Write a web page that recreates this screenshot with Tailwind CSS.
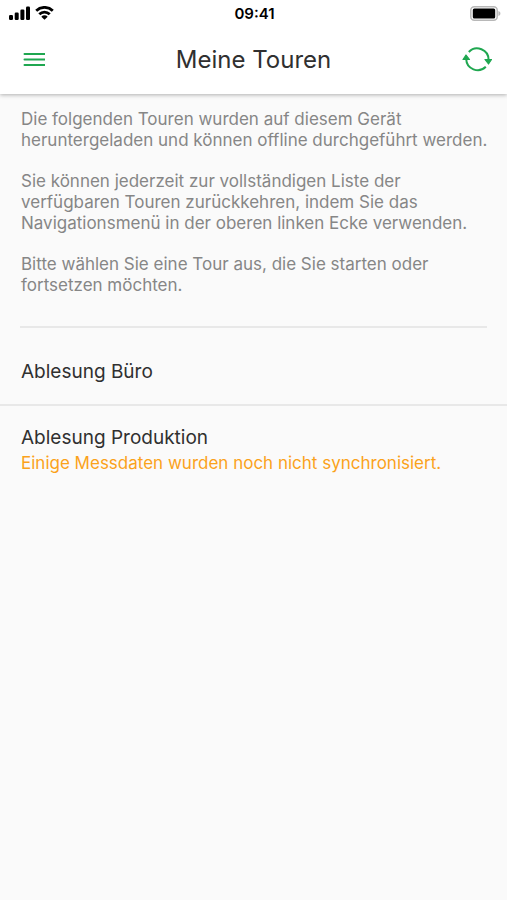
<!DOCTYPE html>
<html lang="de">
<head>
  <meta charset="UTF-8" />
  <meta name="viewport" content="width=device-width, initial-scale=1.0"/>
  <title>Meine Touren</title>
  <script src="https://cdn.jsdelivr.net/npm/@tailwindcss/browser@4"></script>
</head>
<body class="min-h-screen bg-[#fafafa] font-['Inter','Liberation_Sans',sans-serif] text-[#303030]">

  <header class="bg-white shadow-[0_1px_4px_rgba(0,0,0,0.3)]">
    <!-- Status bar -->
    <div class="grid grid-cols-3 items-center h-[26px] pl-2 pr-[6px] text-black">
      <div class="flex items-center gap-1">
        <svg class="w-[23px] h-[14px]" viewBox="0 0 23 14" fill="currentColor" aria-hidden="true">
          <rect x="1" y="9" width="4" height="5" rx="1.2"/>
          <rect x="6.7" y="6.500" width="4" height="7.500" rx="1.2"/>
          <rect x="12.4" y="3.500" width="4" height="10.500" rx="1.2"/>
          <rect x="18" y="0.500" width="4" height="13.500" rx="1.2"/>
        </svg>
        <svg class="w-[19px] h-[14px]" viewBox="0 0 19 14" fill="none" stroke="currentColor" stroke-width="2.800" aria-hidden="true">
          <path d="M1.2 4.700a12 12 0 0 1 16.6 0"/>
          <path d="M4.300 8.300a7.4 7.4 0 0 1 10.4 0"/>
          <path d="M9.5 13.700 6.300 10.700a4.500 4.500 0 0 1 6.400 0z" fill="currentColor" stroke="none"/>
        </svg>
      </div>
      <p class="pt-px text-center text-[15px] leading-5 font-semibold">09:41</p>
      <svg class="justify-self-end w-[31px] h-[15px]" viewBox="0 0 31 15" aria-hidden="true">
        <rect x="0.8" y="0.8" width="26.4" height="13.4" rx="3.5" fill="#fff" stroke="#b8b8b8" stroke-width="1.5"/>
        <rect x="2.8" y="2.6" width="22.4" height="9.8" rx="1.5" fill="#000"/>
        <path d="M28.4 5v5c1.4-.5 2-1.5 2-2.5s-.6-2-2-2.5z" fill="#b8b8b8"/>
      </svg>
    </div>

    <!-- Title bar -->
    <div class="flex items-center justify-between h-[68px] px-2">
      <button type="button" aria-label="Menü" class="flex items-center justify-center size-[52px] text-[#1fa750]">
        <svg class="w-[22px] h-[16px]" viewBox="0 0 22 16" stroke="currentColor" stroke-width="2" stroke-linecap="round" aria-hidden="true">
          <path d="M1.500 2h20M1.500 7.500h20M1.500 13h20"/>
        </svg>
      </button>
      <h1 class="text-2xl">Meine Touren</h1>
      <button type="button" aria-label="Synchronisieren" class="flex items-center justify-end pr-[7px] size-[52px] text-[#1fa750]">
        <svg class="w-[30px] h-[26px]" viewBox="0 0 30 26" fill="none" stroke="currentColor" stroke-width="2" aria-hidden="true">
          <path d="M6.800 5A11.500 11.500 0 0 1 26.600 13"/>
          <path d="M23.800 19.800A11.500 11.500 0 0 1 4.200 12"/>
          <path d="M23 12.500h6.500L26.500 17z" fill="currentColor" stroke-width="1.200" stroke-linejoin="round"/>
          <path d="M1 12.500h6.500L4 8z" fill="currentColor" stroke-width="1.200" stroke-linejoin="round"/>
        </svg>
      </button>
    </div>
  </header>

  <main>
    <!-- Intro -->
    <section class="pt-[15px] pl-[21px] pr-2 space-y-5 text-[17px] leading-[21px] text-[#868686]">
      <p>Die folgenden Touren wurden auf diesem Gerät<br>heruntergeladen und können offline durchgeführt werden.</p>
      <p>Sie können jederzeit zur vollständigen Liste der<br>verfügbaren Touren zurückkehren, indem Sie das<br>Navigationsmenü in der oberen linken Ecke verwenden.</p>
      <p>Bitte wählen Sie eine Tour aus, die Sie starten oder<br>fortsetzen möchten.</p>
    </section>
    <hr class="mx-5 mt-[30px] border-t-2 border-[#e8e8e8]">

    <!-- Tour list -->
    <ul>
      <li class="border-b-2 border-[#e8e8e8]">
        <a href="#" class="flex items-center h-[76px] pt-3 px-[21px] text-[19px] leading-6">Ablesung Büro</a>
      </li>
      <li>
        <a href="#" class="block py-5 px-[21px]">
          <span class="block text-[19px] leading-6">Ablesung Produktion</span>
          <span class="block text-[17px] leading-[26px] text-[#faa21b]">Einige Messdaten wurden noch nicht synchronisiert.</span>
        </a>
      </li>
    </ul>
  </main>

</body>
</html>
